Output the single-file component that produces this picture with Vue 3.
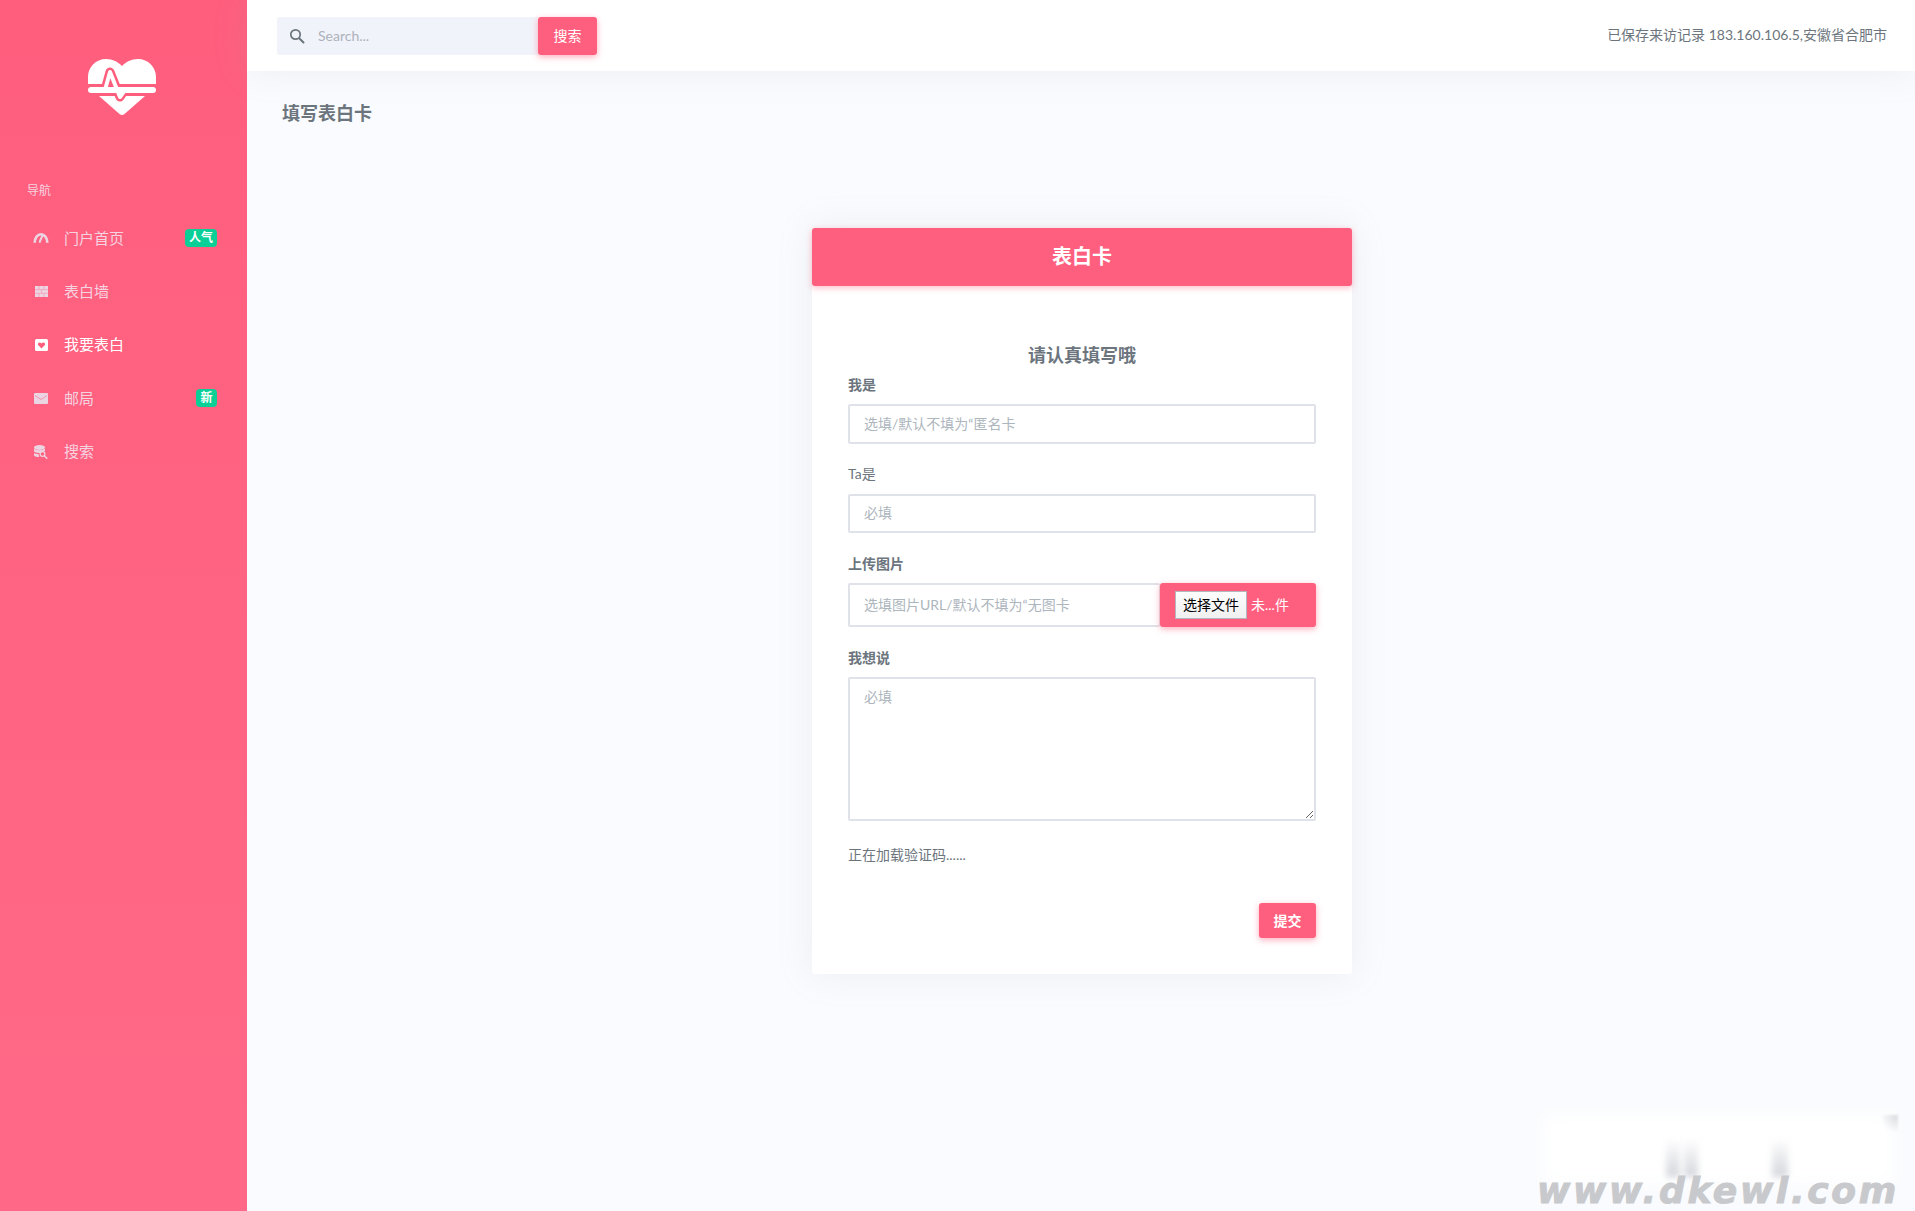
<script setup>
const navItems = [
  { label: '门户首页', icon: 'gauge', badge: '人气' },
  { label: '表白墙', icon: 'wall' },
  { label: '我要表白', icon: 'heart', active: true },
  { label: '邮局', icon: 'mail', badge: '新' },
  { label: '搜索', icon: 'db' },
]
</script>

<template>
  <div class="page">
    <aside class="sidebar">
      <div class="logo">
        <svg width="68" height="56" viewBox="0 0 68 56">
          <path fill="#fff" d="M0 25V18C0 8 8 0 18 0C25 0 30 3 34 7C38 3 43 0 50 0C60 0 68 8 68 18V25Z" />
          <path fill="#fff" d="M11 37H57L36.500 55C35 56.300 33 56.300 31.500 55Z" />
          <path fill="none" stroke="#ff5e7d" stroke-width="9" stroke-linejoin="round" stroke-linecap="round" d="M15 31H17L22 13L32 38L37 31H43" />
          <rect x="0" y="28" width="68" height="6" rx="3" fill="#fff" />
          <path fill="none" stroke="#fff" stroke-width="4" stroke-linejoin="round" stroke-linecap="round" d="M15 31H17L22 13L32 38L37 31H43" />
        </svg>
      </div>
      <div class="nav-title">导航</div>
      <nav>
        <a v-for="item in navItems" :key="item.label" class="nav-item" :class="{ 'is-active': item.active }">
          <span class="nav-icon">
            <svg v-if="item.icon === 'gauge'" width="17" height="12" viewBox="0 0 17 12">
              <path fill="none" stroke="currentColor" stroke-width="2.800" d="M1.800 11C2 5.500 5 2 8.500 2C12 2 15 5.500 15.200 11" />
              <path fill="none" stroke="#ff5e7d" stroke-width="1" d="M4.500 11L8 3.800" />
              <path fill="none" stroke="currentColor" stroke-width="2.200" d="M6.800 11L10.200 3" />
            </svg>
            <svg v-else-if="item.icon === 'wall'" width="13" height="11" viewBox="0 0 13 11">
              <rect width="13" height="11" fill="currentColor" />
              <path fill="none" stroke="#f79ab3" stroke-width="0.700" d="M0 3.600H13M0 7.300H13M4 0V3.600M9 0V3.600M6.500 3.600V7.300M4 7.300V11M9 7.300V11" />
            </svg>
            <svg v-else-if="item.icon === 'heart'" width="13" height="12" viewBox="0 0 13 12">
              <rect width="13" height="12" rx="1.500" fill="currentColor" />
              <path fill="#ff5e7d" d="M6.500 9.500L3.300 6.300C2 4.800 3.900 2.500 5.600 3.800L6.500 4.600L7.400 3.800C9.100 2.500 11 4.800 9.700 6.300Z" />
            </svg>
            <svg v-else-if="item.icon === 'mail'" width="14" height="11" viewBox="0 0 14 11">
              <rect width="14" height="11" rx="1" fill="currentColor" />
              <path fill="none" stroke="#f08ea8" stroke-width="0.900" d="M1 2.500L7 6.500L13 2.500" />
            </svg>
            <svg v-else width="14" height="14" viewBox="0 0 14 14">
              <ellipse cx="5.500" cy="2.500" rx="5.500" ry="2.500" fill="currentColor" />
              <path fill="currentColor" d="M0 3.500C2 5.800 9 5.800 11 3.500V6C9 6.800 7 7 6 8C4 8 1.500 7.500 0 6.500ZM0 8C1 8.700 3 9 4.500 9C4.500 10 4.700 11 5.300 12C3 12 1 11.500 0 10.500Z" />
              <circle cx="8.500" cy="9" r="2.400" fill="none" stroke="currentColor" stroke-width="1.200" />
              <path stroke="currentColor" stroke-width="1.400" d="M10.300 10.800L13.300 13.700" />
            </svg>
          </span>
          <span class="nav-label">{{ item.label }}</span>
          <span v-if="item.badge" class="badge">{{ item.badge }}</span>
        </a>
      </nav>
    </aside>

    <div class="main">
      <header class="topbar">
        <form class="search" @submit.prevent>
          <span class="search-field">
            <svg width="16" height="16" viewBox="0 0 16 16">
              <circle cx="6.500" cy="6.500" r="4.700" fill="none" stroke="#6c757d" stroke-width="1.700" />
              <path stroke="#6c757d" stroke-width="2" stroke-linecap="round" d="M10.200 10.200L14.500 14.500" />
            </svg>
            <input type="text" placeholder="Search..." />
          </span>
          <button class="btn search-btn" type="submit">搜索</button>
        </form>
        <div class="visit">已保存来访记录 183.160.106.5,安徽省合肥市</div>
      </header>

      <div class="content">
        <h1 class="page-title">填写表白卡</h1>
        <section class="card">
          <div class="card-head">表白卡</div>
          <form class="card-body" @submit.prevent>
            <h2 class="form-title">请认真填写哦</h2>
            <div class="field">
              <label>我是</label>
              <input class="control first" type="text" placeholder="选填/默认不填为“匿名卡" />
            </div>
            <div class="field">
              <label class="plain">Ta是</label>
              <input class="control" type="text" placeholder="必填" />
            </div>
            <div class="field">
              <label>上传图片</label>
              <div class="upload">
                <input class="control" type="text" placeholder="选填图片URL/默认不填为“无图卡" />
                <div class="file-box">
                  <button class="file-btn" type="button">选择文件</button>
                  <span class="file-name">未...件</span>
                </div>
              </div>
            </div>
            <div class="field">
              <label>我想说</label>
              <textarea class="control area" placeholder="必填"></textarea>
            </div>
            <p class="loading">正在加载验证码......</p>
            <div class="actions">
              <button class="btn submit" type="submit">提交</button>
            </div>
          </form>
        </section>
      </div>
    </div>

    <div class="mark">
      <div class="mark-fade"></div>
      <span class="streak s1"></span>
      <span class="streak s2"></span>
      <span class="streak s3"></span>
      <span class="corner"></span>
      <span class="mark-text">www.dkewl.com</span>
    </div>
  </div>
</template>

<style>
html, body { margin: 0; background: #fafbfe; }
</style>

<style scoped>
.page {
  position: relative;
  display: flex;
  height: 1211px;
  overflow: hidden;
  background: #fafbfe;
  color: #6c757d;
  font: 14px/21px Lato, "Noto Sans CJK SC", sans-serif;
}
.sidebar {
  width: 247px;
  flex-shrink: 0;
  background: linear-gradient(180deg, #ff5e7d 0%, #ff6987 100%);
}
.logo {
  display: flex;
  justify-content: center;
  height: 56px;
  padding: 59px 3px 0 0;
}
.nav-title {
  margin-top: 66px;
  padding-left: 27px;
  height: 20px;
  line-height: 20px;
  font-size: 12px;
  color: #f6d3e0;
}
nav { margin-top: 10.5px; }
.nav-item {
  display: flex;
  align-items: center;
  height: 53.4px;
  padding: 0 30px 0 33px;
  font-size: 15px;
  color: #f5d3e0;
}
.nav-item.is-active { color: #fff; }
.nav-icon {
  display: flex;
  justify-content: center;
  align-items: center;
  width: 16px;
  margin-right: 15px;
  color: #ecd5e2;
}
.nav-item.is-active .nav-icon { color: #fff; }
.nav-label { flex: 1; }
.badge {
  padding: 0 4px;
  min-width: 13px;
  height: 18px;
  border-radius: 4px;
  background: #0acf97;
  color: #fff;
  font-size: 12px;
  font-weight: 700;
  line-height: 18px;
  text-align: center;
}
.main {
  flex: 1;
  min-width: 0;
}
.topbar {
  position: relative;
  display: flex;
  align-items: center;
  justify-content: space-between;
  height: 71px;
  padding: 0 28px 0 30px;
  background: #fff;
  box-shadow: 0 0 35px rgba(154, 161, 171, 0.15);
}
.search { display: flex; height: 38px; }
.search-field {
  display: flex;
  align-items: center;
  width: 261px;
  padding-left: 12px;
  box-sizing: border-box;
  background: #f1f3fa;
  border-radius: 2px 0 0 2px;
}
.search-field input {
  flex: 1;
  min-width: 0;
  margin-left: 11px;
  border: 0;
  outline: 0;
  background: transparent;
  font: inherit;
}
.search-field input::placeholder { color: #adb1bb; opacity: 1; }
.btn {
  border: 0;
  border-radius: 3px;
  background: #ff5f7e;
  color: #fff;
  font: inherit;
  box-shadow: 0 2px 6px 0 rgba(255, 91, 121, 0.5);
}
.search-btn { width: 59px; padding: 0; }
.visit { color: #6c757d; margin-top: -2px; }
.content { padding-top: 31px; }
.page-title {
  margin: 0;
  padding-left: 35px;
  height: 22px;
  font-size: 18px;
  font-weight: 700;
  line-height: 22px;
}
.card {
  width: 540px;
  margin: 104px 0 0 565px;
  border-radius: 3px;
  background: #fff;
  box-shadow: 0 0 35px rgba(154, 161, 171, 0.15);
}
.card-head {
  position: relative;
  height: 58px;
  border-radius: 3px;
  background: #ff5f7e;
  color: #fff;
  font-size: 20px;
  font-weight: 700;
  line-height: 56px;
  text-align: center;
  box-shadow: 0 2px 6px 0 rgba(255, 91, 121, 0.4);
}
.card-body { padding: 57px 36px 36px; }
.form-title {
  margin: 0;
  height: 24px;
  font-size: 18px;
  font-weight: 700;
  line-height: 24px;
  text-align: center;
}
.field { margin-top: 20px; }
.form-title + .field { margin-top: 7px; }
.field label {
  display: block;
  margin-bottom: 9px;
  height: 21px;
  font-weight: 600;
}
.field label.plain { font-weight: 400; margin-top: -1px; margin-bottom: 10px; }
.control {
  display: block;
  width: 100%;
  height: 39px;
  box-sizing: border-box;
  padding: 0 14px 2px;
  border: 2px solid #dfe2e8;
  border-radius: 2px;
  outline: 0;
  background: #fff;
  color: #6c757d;
  font: inherit;
}
.control.first { height: 40px; }
.control::placeholder { color: #adb5bd; opacity: 1; }
.upload { display: flex; height: 44px; }
.upload .control { flex: 1; width: auto; min-width: 0; height: 44px; border-right-width: 1px; }
.file-box {
  display: flex;
  align-items: center;
  width: 156px;
  padding-left: 15px;
  box-sizing: border-box;
  border-radius: 3px;
  background: #ff5f7e;
  box-shadow: 0 2px 6px 0 rgba(255, 91, 121, 0.5);
}
.file-btn {
  width: 72px;
  height: 28px;
  padding: 0 0 2px;
  border: 1px solid #b5b5bd;
  border-radius: 0;
  background: linear-gradient(180deg, #fdfdfd, #f0f0f0);
  color: #000;
  font: inherit;
}
.file-name { margin: -2px 0 0 4px; color: #fff; }
.area { height: 144px; padding-top: 7px; resize: vertical; }
.loading { margin: 23px 0 0; }
.actions {
  display: flex;
  justify-content: flex-end;
  margin-top: 38px;
}
.submit { width: 57px; height: 35px; padding: 0; font-weight: 600; }

.mark {
  position: absolute;
  right: 0;
  bottom: 0;
  width: 395px;
  height: 110px;
  pointer-events: none;
}
.mark-fade {
  position: absolute;
  left: 22px;
  top: 12px;
  width: 354px;
  height: 72px;
  background: rgba(255, 255, 255, 0.9);
  filter: blur(8px);
}
.streak {
  position: absolute;
  top: 40px;
  height: 36px;
  background: linear-gradient(180deg, rgba(220, 222, 228, 0.1), rgba(205, 207, 214, 0.85));
  filter: blur(3px);
}
.s1 { left: 146px; width: 14px; }
.s2 { left: 164px; width: 14px; }
.s3 { left: 252px; width: 16px; }
.corner {
  position: absolute;
  left: 362px;
  top: 14px;
  width: 16px;
  height: 18px;
  background: radial-gradient(circle at 100% 0, #d8dade 0%, rgba(230, 232, 236, 0) 75%);
  filter: blur(1px);
}
.mark-text {
  position: absolute;
  left: 17px;
  bottom: 5px;
  color: #c8c9cc;
  -webkit-text-stroke: 1px #c8c9cc;
  font: italic 700 36px/30px "DejaVu Sans", sans-serif;
  letter-spacing: 2.700px;
  white-space: nowrap;
}
</style>
